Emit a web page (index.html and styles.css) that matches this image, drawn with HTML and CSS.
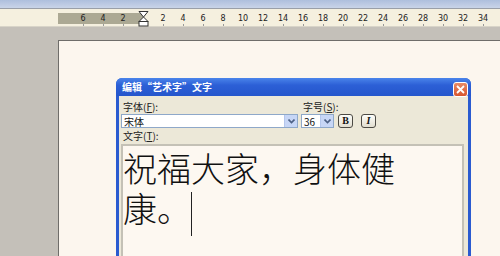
FILE: index.html
```html
<!DOCTYPE html>
<html lang="zh-CN">
<head>
  <meta charset="UTF-8" />
  <title>编辑“艺术字”文字</title>
  <link rel="stylesheet" href="styles.css">
</head>
<body>

  <div class="toolbar-edge"></div>

  <div class="ruler">
    <div class="ruler-track">
      <div class="ruler-margin"></div>
      <div class="ruler-nums">
        <span>6</span><span>4</span><span>2</span>
        <span class="indent">
          <svg width="11" height="16" viewBox="0 0 11 16">
            <path d="M1 0.5 H10 L5.5 6 Z" fill="#fff" stroke="#333" />
            <path d="M5.5 6 L10 10.5 H1 Z" fill="#fff" stroke="#333" />
            <rect x="1" y="10.5" width="9" height="4.5" fill="#fff" stroke="#333" />
          </svg>
        </span>
        <span>2</span><span>4</span><span>6</span><span>8</span><span>10</span>
        <span>12</span><span>14</span><span>16</span><span>18</span><span>20</span>
        <span>22</span><span>24</span><span>26</span><span>28</span><span>30</span>
        <span>32</span><span>34</span>
      </div>
    </div>
  </div>

  <div class="workspace">
    <div class="page"></div>
  </div>

  <div class="dialog">
    <div class="titlebar">
      <span class="title">编辑<span class="q open">“</span>艺术字<span class="q shut">”</span>文字</span>
      <span class="close">
        <svg width="9" height="9" viewBox="0 0 9 9">
          <path d="M1 1 L8 8 M8 1 L1 8" stroke="#fff" stroke-width="1.8" />
        </svg>
      </span>
    </div>
    <div class="dialog-body">
      <div class="row">
        <div class="field font-field">
          <label>字体(<u>F</u>):</label>
          <div class="select wide">
            <span>宋体</span>
            <span class="arrow"><svg width="7" height="5" viewBox="0 0 7 5"><path d="M0.5 0.5 L3.5 3.5 L6.5 0.5" fill="none" stroke="#4d6185" stroke-width="1.6"/></svg></span>
          </div>
        </div>
        <div class="field size-field">
          <label>字号(<u>S</u>):</label>
          <div class="size-row">
            <div class="select narrow">
              <span>36</span>
              <span class="arrow"><svg width="7" height="5" viewBox="0 0 7 5"><path d="M0.5 0.5 L3.5 3.5 L6.5 0.5" fill="none" stroke="#4d6185" stroke-width="1.6"/></svg></span>
            </div>
            <span class="toggle bold">B</span>
            <span class="toggle italic">I</span>
          </div>
        </div>
      </div>
      <label class="text-label">文字(<u>T</u>):</label>
      <div class="textbox">
        <p>祝福大家，身体健康。<span class="caret"></span></p>
      </div>
    </div>
  </div>

</body>
</html>
```

FILE: styles.css
```css
body {
  margin: 0;
  width: 500px;
  height: 256px;
  overflow: hidden;
  position: relative;
  background: #c4c0b9;
  font-family: "Noto Sans CJK SC", "DejaVu Sans", sans-serif;
}

.toolbar-edge {
  height: 8px;
  background: linear-gradient(#aebfdd, #c9d4e8);
  border-bottom: 1px solid #9a9fa8;
}

.ruler {
  height: 18px;
  background: #f5f0df;
  border-bottom: 1px solid #d8d4c8;
  padding-top: 4px;
  box-sizing: border-box;
}

.ruler-track {
  position: relative;
  height: 11px;
  margin-left: 58px;
}

.ruler-margin {
  position: absolute;
  left: 0;
  top: 0;
  width: 85px;
  height: 11px;
  background: #aca994;
}

.ruler-nums {
  position: relative;
  display: flex;
  padding-left: 15px;
  height: 11px;
}

.ruler-nums span {
  width: 20px;
  flex: none;
  text-align: center;
  font-family: "DejaVu Sans", sans-serif;
  font-size: 8px;
  line-height: 12px;
  color: #222;
  position: relative;
}

.ruler-nums span::after {
  content: "";
  position: absolute;
  left: 10px;
  bottom: -2px;
  width: 1px;
  height: 2px;
  background: #999;
}

.ruler-nums .indent::after {
  display: none;
}

.ruler-nums .indent svg {
  position: absolute;
  left: 5px;
  top: -2px;
}

.workspace {
  padding: 13px 0 0 58px;
}

.page {
  height: 215px;
  background: #fcf6ee;
  border-left: 1px solid #6f6d6a;
  border-top: 1px solid #6f6d6a;
}

.dialog {
  position: absolute;
  left: 116px;
  top: 78px;
  width: 355px;
  height: 178px;
  background: #2a5bd0;
  border-radius: 6px 6px 0 0;
  box-sizing: border-box;
  padding: 0 3px;
}

.titlebar {
  height: 18px;
  display: flex;
  align-items: center;
  justify-content: space-between;
  background: linear-gradient(#4a84ea, #2c5fd6 40%, #2556cc);
  border-radius: 6px 6px 0 0;
  margin: 0 -3px;
  padding-left: 6px;
  padding-right: 3px;
}

.title {
  color: #fff;
  font-size: 10px;
  font-weight: bold;
  line-height: 18px;
}

.q {
  display: inline-block;
  width: 1em;
}

.q.open {
  text-align: right;
}

.q.shut {
  text-align: left;
}

.close {
  width: 15px;
  height: 15px;
  margin-top: 4px;
  display: flex;
  align-items: center;
  justify-content: center;
  background: linear-gradient(#e98a66, #d6552f);
  border: 1px solid #fff;
  border-radius: 3px;
  box-sizing: border-box;
}

.dialog-body {
  background: #ece8d8;
  height: 160px;
  padding: 4px 4px 0 2px;
  box-sizing: border-box;
}

.row {
  display: flex;
  gap: 3px;
}

.field label,
.text-label {
  display: block;
  font-size: 10px;
  line-height: 14px;
  color: #222;
  padding-left: 2px;
}

.select {
  display: flex;
  justify-content: space-between;
  align-items: center;
  height: 14px;
  background: #fff;
  border: 1px solid #8ea8c9;
  box-sizing: border-box;
  font-size: 10px;
  color: #111;
  padding-left: 2px;
}

.select.wide {
  width: 177px;
}

.select.narrow {
  width: 33px;
}

.arrow {
  width: 12px;
  height: 12px;
  background: #c7d6f6;
  border-left: 1px solid #b4c6ec;
  display: flex;
  align-items: center;
  justify-content: center;
}

.size-row {
  display: flex;
  align-items: center;
  gap: 4px;
}

.toggle {
  width: 15px;
  height: 14px;
  box-sizing: border-box;
  border: 1px solid #4c4a44;
  border-radius: 3px;
  background: linear-gradient(#fdfdfa, #e2ded0);
  font-family: "Liberation Serif", serif;
  font-weight: bold;
  font-size: 10px;
  line-height: 12px;
  text-align: center;
  color: #111;
}

.toggle.italic {
  font-style: italic;
  margin-left: 4px;
}

.text-label {
  margin-top: 1px;
}

.textbox {
  height: 112px;
  margin-top: 1px;
  background: #fdf8f1;
  border: 2px solid #c4c1b6;
  border-bottom: none;
  box-sizing: border-box;
  padding: 2px 10px 0 0;
}

.textbox p {
  margin: 0;
  font-family: "Noto Sans CJK SC", sans-serif;
  font-weight: 300;
  font-size: 34px;
  line-height: 40px;
  color: #111;
  width: 280px;
}

.caret {
  display: inline-block;
  width: 1px;
  height: 44px;
  background: #222;
  vertical-align: -14px;
}
```
